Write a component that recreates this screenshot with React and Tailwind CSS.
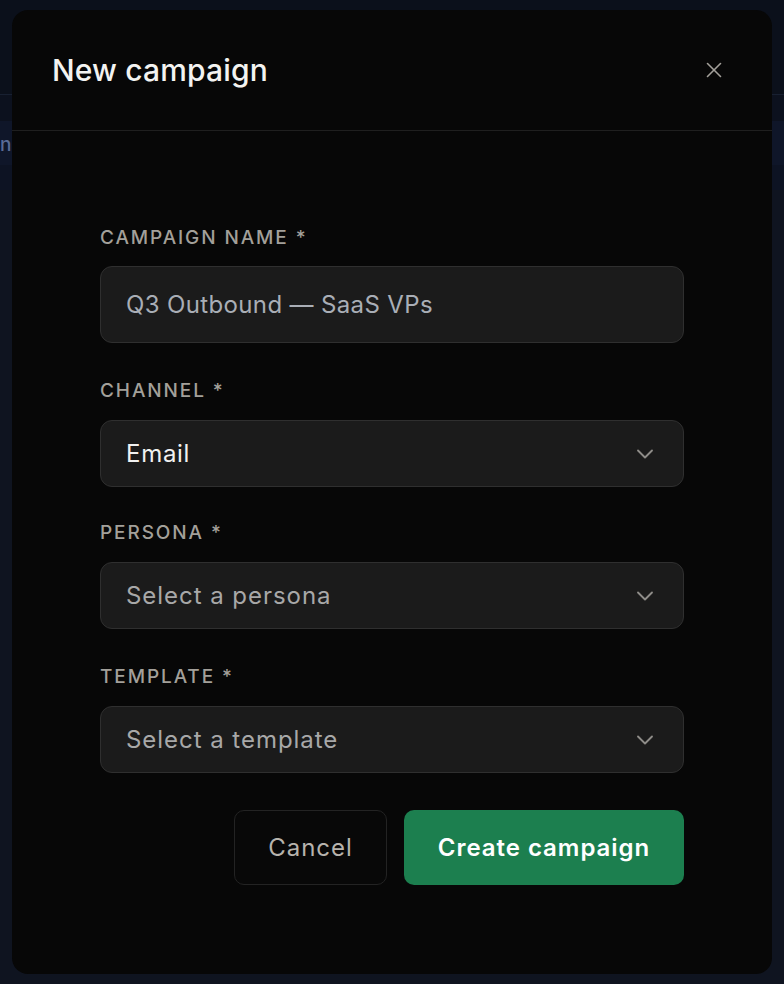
import { X, ChevronDown } from 'lucide-react';
import { useState } from 'react';

const font = { fontFamily: 'Inter, "Noto Sans", sans-serif' };

const Label = ({ children }) => (
    <label className="block text-[19px] leading-[24px] font-medium uppercase tracking-[0.1em] text-[#a3a09a] mb-[17px]">
        {children} *
    </label>
);

const SelectField = ({ value, placeholder }) => (
    <button type="button" className="w-full h-[67px] flex items-center justify-between pl-[25px] pr-[24px] bg-[#1b1b1b] border border-[#2f2f2f] rounded-[12px] text-left">
        <span className={value ? 'text-[24px] tracking-[0.03em] text-[#f1f1f1]' : 'text-[24px] tracking-[0.04em] text-[#a8a8a8]'}>
            {value || placeholder}
        </span>
        <ChevronDown size={28} strokeWidth={1.6} className="text-[#8e8c88]" />
    </button>
);

const App = () => {
    const [name, setName] = useState('');

    return (
        <div className="relative w-[784px] h-[984px] overflow-hidden bg-[#0f1420]" style={font}>
            {/* Page behind the dialog */}
            <div className="h-[95px] bg-[#0b101b] border-b border-[#182031]"></div>
            <div className="h-[26px] bg-[#0c111e]"></div>
            <div className="h-[44px] bg-[#0f1629] flex items-center">
                <span className="text-[19px] font-medium text-[#5a6b96] mt-[4px]">nr</span>
            </div>
            <div className="h-[25px] bg-[#0d1323]"></div>

            {/* Dialog */}
            <div className="absolute inset-0 flex items-center justify-center">
                <div className="w-[760px] h-[964px] bg-[#070707] rounded-[16px] flex flex-col">
                    {/* Header */}
                    <div className="h-[121px] px-10 flex items-center justify-between border-b border-[#1f1f1f] flex-none">
                        <h2 className="text-[30px] font-medium text-[#f3f3f1] tracking-[0.005em]">New campaign</h2>
                        <button type="button" className="w-9 h-9 flex items-center justify-center text-[#a3a09a]">
                            <X size={26} strokeWidth={1.5} />
                        </button>
                    </div>

                    {/* Body */}
                    <form className="px-[88px] pt-[95px] flex flex-col" onSubmit={e => e.preventDefault()}>
                        <div>
                            <Label>Campaign name</Label>
                            <input
                                value={name}
                                onChange={e => setName(e.target.value)}
                                placeholder="Q3 Outbound — SaaS VPs"
                                className="w-full h-[77px] -mt-[1px] px-[25px] bg-[#1b1b1b] border border-[#2f2f2f] rounded-[12px] text-[24px] tracking-[0.015em] text-[#f1f1f1] placeholder:text-[#a9aeb6] focus:outline-none"
                            />
                        </div>
                        <div className="mt-[36px]">
                            <Label>Channel</Label>
                            <SelectField value="Email" />
                        </div>
                        <div className="mt-[34px]">
                            <Label>Persona</Label>
                            <SelectField placeholder="Select a persona" />
                        </div>
                        <div className="mt-[36px]">
                            <Label>Template</Label>
                            <SelectField placeholder="Select a template" />
                        </div>
                        <div className="mt-[37px] flex justify-end gap-[17px]">
                            <button type="button" className="h-[75px] w-[153px] rounded-[10px] border border-[#232323] bg-[#080808] text-[24px] tracking-[0.04em] text-[#b7b3ad]">
                                Cancel
                            </button>
                            <button type="submit" className="h-[75px] w-[280px] rounded-[10px] bg-[#1c7f4f] text-[24px] font-semibold text-white tracking-[0.04em]">
                                Create campaign
                            </button>
                        </div>
                    </form>
                </div>
            </div>
        </div>
    );
};

export default App;
